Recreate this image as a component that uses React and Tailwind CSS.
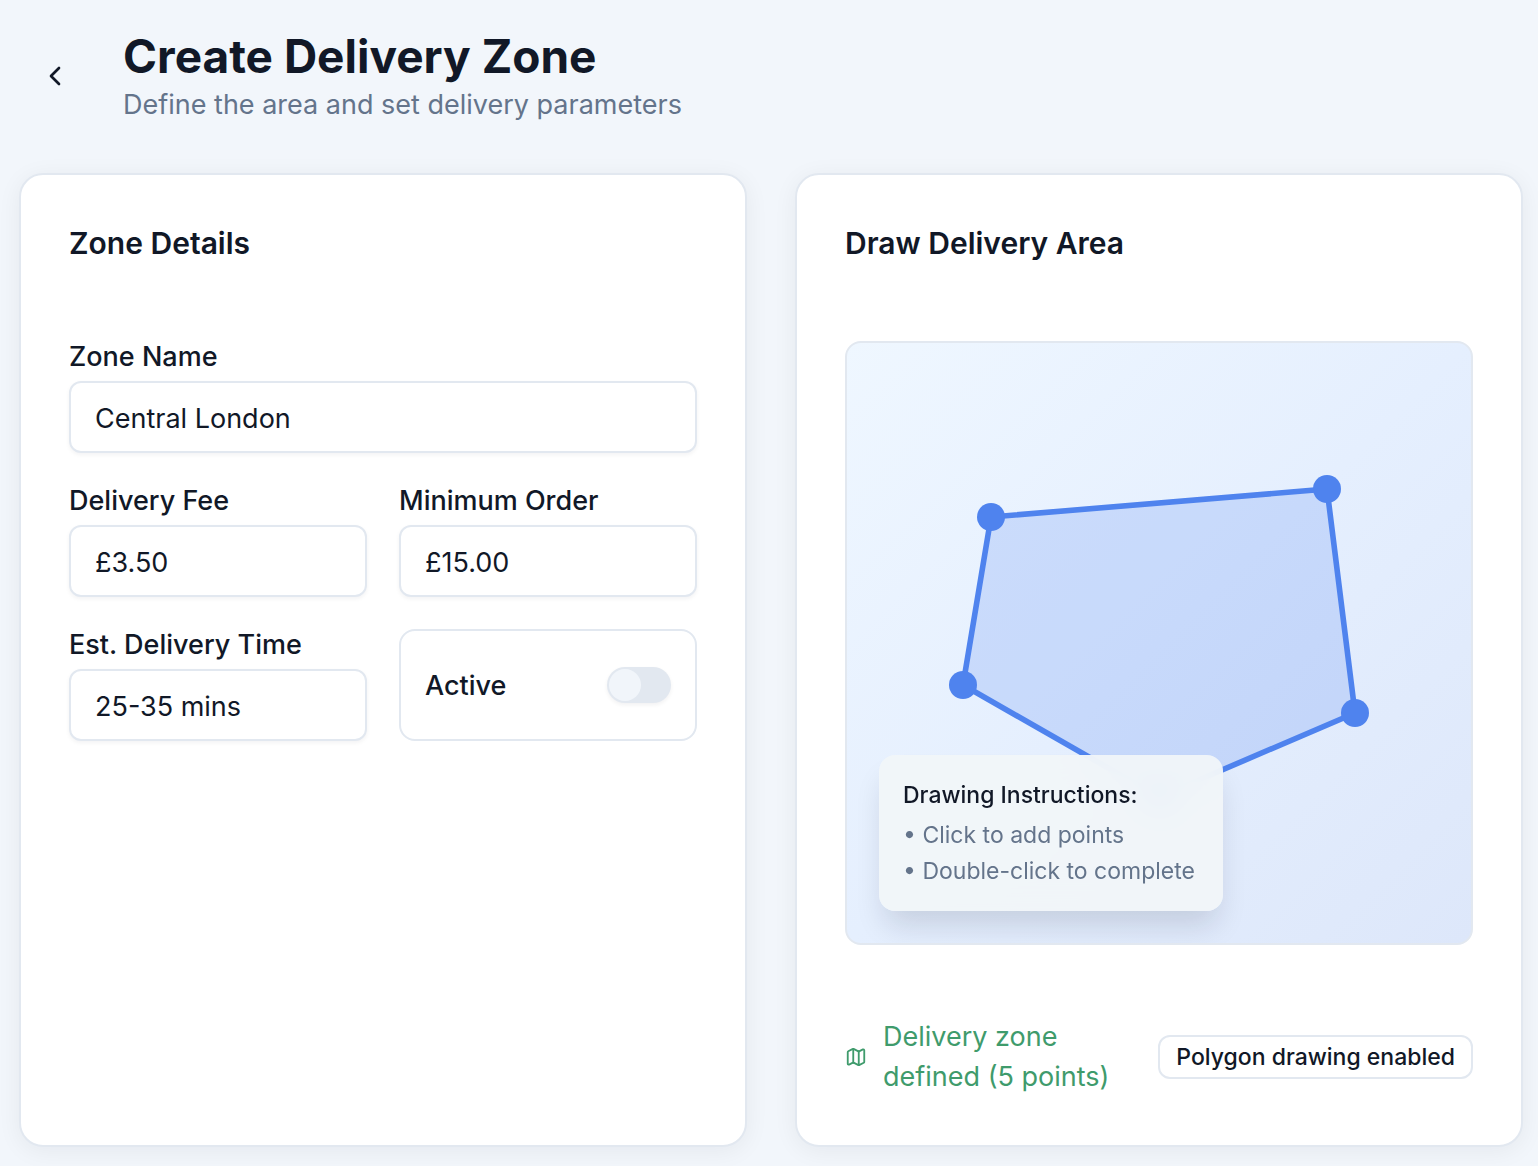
import { useState } from 'react';
import { ChevronLeft, Map } from 'lucide-react';

const points = [
  [144, 174],
  [480, 146],
  [508, 370],
  [312, 454],
  [116, 342],
];

function Card({ title, children }) {
  return (
    <section className="flex flex-col rounded-3xl border-2 border-[#e2e8f0] bg-white p-12 shadow-[0_4px_24px_rgba(15,23,42,0.06)]">
      <h2 className="mb-[78px] text-[30px] leading-10 font-semibold">{title}</h2>
      {children}
    </section>
  );
}

function Field({ id, label, defaultValue }) {
  return (
    <div className="flex flex-col gap-2.5">
      <label htmlFor={id} className="pt-0.5 text-[27px] leading-7 font-medium">{label}</label>
      <input
        id={id}
        type="text"
        defaultValue={defaultValue}
        className="h-[72px] w-full rounded-xl border-2 border-[#e2e8f0] bg-white px-6 pt-0.5 text-[27px] shadow-[0_2px_4px_rgba(15,23,42,0.05)] outline-none"
      />
    </div>
  );
}

function DeliveryMap() {
  return (
    <div className="relative overflow-hidden rounded-2xl border-2 border-[#e2e8f0] bg-linear-to-br from-[#eff7ff] via-[#e5effe] to-[#dde7fa]">
      <svg viewBox="0 0 624 600" className="block w-full" role="img" aria-label="Delivery area">
        <polygon
          points={points.map((p) => p.join(',')).join(' ')}
          fill="#4f83ee"
          fillOpacity="0.2"
          stroke="#4f83ee"
          strokeWidth="5.6"
        />
        {points.map(([x, y]) => (
          <circle key={x} cx={x} cy={y} r="14" fill="#4f83ee" />
        ))}
      </svg>
      <div className="absolute bottom-8 left-8 w-[344px] rounded-2xl bg-[#f1f5f9]/95 p-6 text-[23px] shadow-[0_20px_30px_-6px_rgba(15,23,42,0.14)] backdrop-blur-lg">
        <p className="mb-2 leading-8 font-medium">Drawing Instructions:</p>
        <ul className="flex flex-col gap-1 leading-8 text-[#64748b]">
          <li>• Click to add points</li>
          <li>• Double-click to complete</li>
        </ul>
      </div>
    </div>
  );
}

export default function App() {
  const [active, setActive] = useState(false);

  return (
    <main className="min-h-screen bg-[#f2f6fb] pt-[27px] pr-[15px] pb-5 pl-[19px] font-['Inter','Noto_Sans',sans-serif] text-[#111827]">
      <header className="mb-12 flex items-center gap-8">
        <button type="button" aria-label="Back" className="flex size-[72px] items-center justify-center rounded-xl">
          <ChevronLeft className="size-8" />
        </button>
        <div>
          <h1 className="text-[46px] leading-[58px] font-bold">Create Delivery Zone</h1>
          <p className="text-[27px] leading-10 text-[#64748b]">Define the area and set delivery parameters</p>
        </div>
      </header>

      <div className="grid grid-cols-2 gap-12">
        <Card title="Zone Details">
          <form className="grid grid-cols-2 gap-8">
            <div className="col-span-2">
              <Field id="zone-name" label="Zone Name" defaultValue="Central London" />
            </div>
            <Field id="fee" label="Delivery Fee" defaultValue="£3.50" />
            <Field id="minimum" label="Minimum Order" defaultValue="£15.00" />
            <Field id="time" label="Est. Delivery Time" defaultValue="25-35 mins" />
            <div className="flex items-center justify-between rounded-2xl border-2 border-[#e2e8f0] px-6">
              <label htmlFor="active" className="pt-0.5 text-[27px] leading-7 font-medium">Active</label>
              <input
                id="active"
                type="checkbox"
                role="switch"
                checked={active}
                onChange={(e) => setActive(e.target.checked)}
                className="flex h-9 w-16 cursor-pointer appearance-none items-center rounded-full bg-[#e2e8f0] p-0.5 shadow-[0_2px_4px_rgba(15,23,42,0.06)] before:size-8 before:rounded-full before:bg-[#f1f5fa] before:content-[''] checked:justify-end checked:bg-[#4f83ee]"
              />
            </div>
          </form>
        </Card>

        <Card title="Draw Delivery Area">
          <DeliveryMap />
          <div className="mt-[72px] flex items-center justify-between gap-8">
            <div className="flex items-center gap-4 text-[27px] leading-10 text-[#3f9b6c]">
              <Map className="size-[22px] shrink-0" />
              <span>Delivery zone defined (5 points)</span>
            </div>
            <span className="shrink-0 rounded-xl border-2 border-[#e2e8f0] px-4 py-1 text-[23px] leading-8 font-medium">
              Polygon drawing enabled
            </span>
          </div>
        </Card>
      </div>
    </main>
  );
}
